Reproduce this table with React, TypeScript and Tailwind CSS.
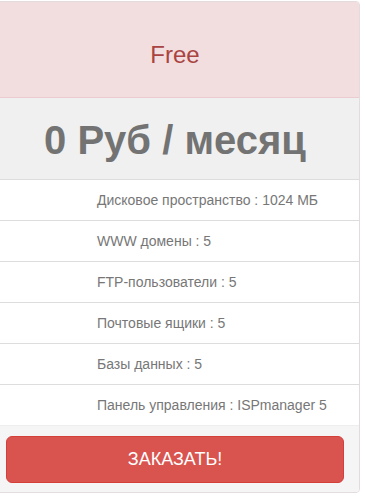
const features = [
  "Дисковое пространство : 1024 МБ",
  "WWW домены : 5",
  "FTP-пользователи : 5",
  "Почтовые ящики : 5",
  "Базы данных : 5",
  "Панель управления : ISPmanager 5",
]

export default function App() {
  return (
    <div className="min-h-screen bg-white pt-[1px] overflow-hidden font-['Liberation_Sans',Arial,sans-serif]">
      <div className="-ml-[10px] w-[370px] rounded-[4px] border border-[#e3dcdd] bg-white overflow-hidden">
        <div className="h-[96px] pt-[10px] flex items-center justify-center bg-[#f2dede] border-b border-[#ebccd1]">
          <h3 className="text-[24px] leading-none text-[#a94442]">Free</h3>
        </div>
        <div className="h-[81px] pt-[3px] flex items-center justify-center bg-[#f0f0f0]">
          <span className="text-[40px] font-bold leading-none text-[#737373]">0 Руб / месяц</span>
        </div>
        <ul>
          {features.map((f, i) => (
            <li key={i} className="h-[41px] border-t border-[#dddddd] pl-[106px] flex items-center text-[14px] text-[#777777]">
              {f}
            </li>
          ))}
        </ul>
        <div className="bg-[#f5f5f5] border-t border-[#eeeeee] px-[15px] pt-[10px] pb-[9px]">
          <button className="w-full h-[47px] rounded-[6px] bg-[#d9534f] border border-[#d43f3a] text-white text-[18px]">
            ЗАКАЗАТЬ!
          </button>
        </div>
      </div>
    </div>
  )
}
